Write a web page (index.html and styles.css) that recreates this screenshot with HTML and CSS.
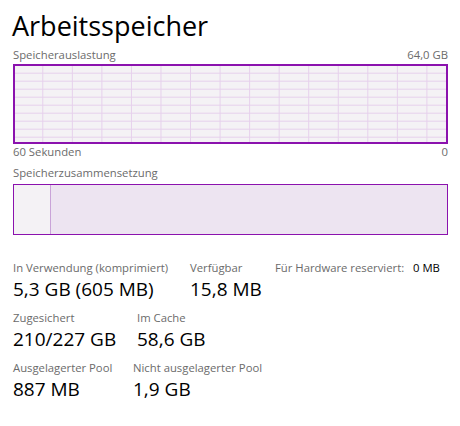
FILE: index.html
```html
<!DOCTYPE html>
<html lang="de">
<head>
<meta charset="utf-8">
<title>Arbeitsspeicher</title>
<link rel="stylesheet" href="styles.css">
</head>
<body>
<main class="page">
  <h1 class="title">Arbeitsspeicher</h1>

  <div class="graph-head">
    <span class="label">Speicherauslastung</span>
    <span class="label">64,0 GB</span>
  </div>
  <div class="graph"></div>
  <div class="graph-foot">
    <span class="label">60 Sekunden</span>
    <span class="label">0</span>
  </div>

  <div class="comp-head">
    <span class="label">Speicherzusammensetzung</span>
  </div>
  <div class="comp">
    <div class="comp-used"></div>
    <div class="comp-sep"></div>
    <div class="comp-rest"></div>
  </div>

  <section class="stats">
    <div class="stat-row">
      <div class="stat w-inuse">
        <div class="label">In Verwendung (komprimiert)</div>
        <div class="value">5,3 GB (605 MB)</div>
      </div>
      <div class="stat w-avail">
        <div class="label">Verfügbar</div>
        <div class="value">15,8 MB</div>
      </div>
      <div class="hw">
        <span class="label">Für Hardware reserviert:</span>
        <span class="hw-value">0 MB</span>
      </div>
    </div>
    <div class="stat-row">
      <div class="stat w-commit">
        <div class="label">Zugesichert</div>
        <div class="value">210/227 GB</div>
      </div>
      <div class="stat">
        <div class="label">Im Cache</div>
        <div class="value">58,6 GB</div>
      </div>
    </div>
    <div class="stat-row">
      <div class="stat w-paged">
        <div class="label">Ausgelagerter Pool</div>
        <div class="value">887 MB</div>
      </div>
      <div class="stat">
        <div class="label">Nicht ausgelagerter Pool</div>
        <div class="value">1,9 GB</div>
      </div>
    </div>
  </section>
</main>
</body>
</html>
```

FILE: styles.css
```css
html, body {
  margin: 0;
  padding: 0;
  background: #ffffff;
}

body {
  font-family: "Open Sans", "Noto Sans", "DejaVu Sans", sans-serif;
  color: #000;
}

.page {
  padding: 9px 12px 0 13px;
}

.title {
  margin: 0 0 0 -1px;
  font-size: 27px;
  font-weight: 400;
  line-height: 33px;
  letter-spacing: 0;
  color: #000;
}

.label {
  font-size: 11.3px;
  line-height: 16px;
  color: #6b6b6b;
  white-space: nowrap;
}

.graph-head,
.graph-foot {
  display: flex;
  justify-content: space-between;
}

.graph-head {
  margin-top: 5px;
  margin-bottom: 1px;
}

.graph {
  box-sizing: border-box;
  height: 80px;
  border: 2px solid #8b12ae;
  background-color: #f4f2f5;
  background-image:
    linear-gradient(to right, #e6d0ec 1px, transparent 1px),
    linear-gradient(to bottom, #e6d0ec 1px, transparent 1px);
  background-size: 29.55px 100%, 100% 8px;
  background-position: 27.3px 0, 0 6.7px;
}

.comp-head {
  margin-top: 0;
  margin-bottom: 2px;
}

.comp {
  box-sizing: border-box;
  height: 51px;
  border: 1.5px solid #8b12ae;
  display: flex;
}

.comp-used {
  width: 35.5px;
  background: #f4f2f5;
}

.comp-sep {
  width: 1px;
  background: #c9a3d8;
}

.comp-rest {
  flex: 1;
  background: #ede4f1;
}

.stats {
  margin-top: 25px;
  display: flex;
  flex-direction: column;
  gap: 9px;
}

.stat-row {
  display: flex;
  align-items: flex-start;
}

.stat .value {
  margin-top: 1px;
  font-size: 19px;
  line-height: 24px;
  color: #000;
  white-space: nowrap;
}

.w-inuse { width: 177px; }
.w-avail { width: 85px; }
.w-commit { width: 124px; }
.w-paged { width: 120px; }

.hw {
  display: flex;
}

.hw .label {
  width: 138px;
}

.hw-value {
  font-size: 11.3px;
  line-height: 16px;
  color: #000;
}
```
